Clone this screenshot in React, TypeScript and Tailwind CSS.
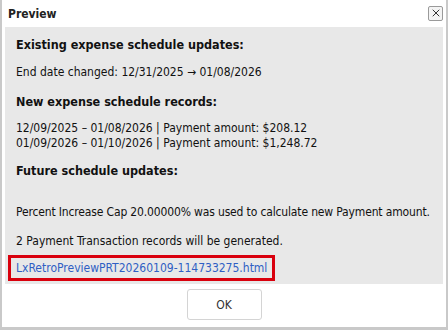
import { X } from 'lucide-react'

const font = { fontFamily: '"DejaVu Sans Condensed", "DejaVu Sans", sans-serif' }

export default function App() {
  return (
    <div className="w-[448px] h-[330px] bg-[#b8b8b8]" style={font}>
      <div className="w-[448px] h-[330px] border-x-[2px] border-b-[3px] border-[#c9c9c9] bg-white flex flex-col">
        {/* Title bar */}
        <div className="h-[27px] flex items-center justify-between pl-[6px] pr-[3px]">
          <span className="text-[12px] font-bold text-[#222]">Preview</span>
          <button className="w-[15px] h-[15px] mt-[-1px] border border-[#9a9a9a] rounded-[2px] bg-[#f4f4f4] flex items-center justify-center">
            <X className="w-[12px] h-[12px] text-[#333]" strokeWidth={2} />
          </button>
        </div>

        {/* Body */}
        <div className="mx-[3px] h-[257px] bg-[#e8e8e8] pl-[11px] pr-[4px] pt-[10px] text-[12px] leading-[15px] text-[#111] whitespace-nowrap">
          <h2 className="text-[12.5px] font-bold">Existing expense schedule updates:</h2>
          <p className="mt-[13px]">End date changed: 12/31/2025 → 01/08/2026</p>
          <h2 className="mt-[14px] text-[12.5px] font-bold">New expense schedule records:</h2>
          <p className="mt-[12px]">
            12/09/2025 – 01/08/2026 | Payment amount: $208.12
            <br />
            01/09/2026 – 01/10/2026 | Payment amount: $1,248.72
          </p>
          <h2 className="mt-[12px] text-[12.5px] font-bold">Future schedule updates:</h2>
          <p className="mt-[27px] tracking-[-0.15px]">Percent Increase Cap 20.00000% was used to calculate new Payment amount.</p>
          <p className="mt-[14px]">2 Payment Transaction records will be generated.</p>
          <div className="mt-[6px] ml-[-8px] w-fit border-[3px] border-[#d9000d] px-[5px] py-[2px] leading-[16px]">
            <a className="text-[#2f5fc4]">LxRetroPreviewPRT20260109-114733275.html</a>
          </div>
        </div>

        {/* Footer */}
        <div className="flex-1 flex items-start justify-center pt-[5px]">
          <button className="w-[75px] h-[31px] border border-[#d4d4d4] rounded-[3px] bg-white text-[12px] text-[#333]">
            OK
          </button>
        </div>
      </div>
    </div>
  )
}
